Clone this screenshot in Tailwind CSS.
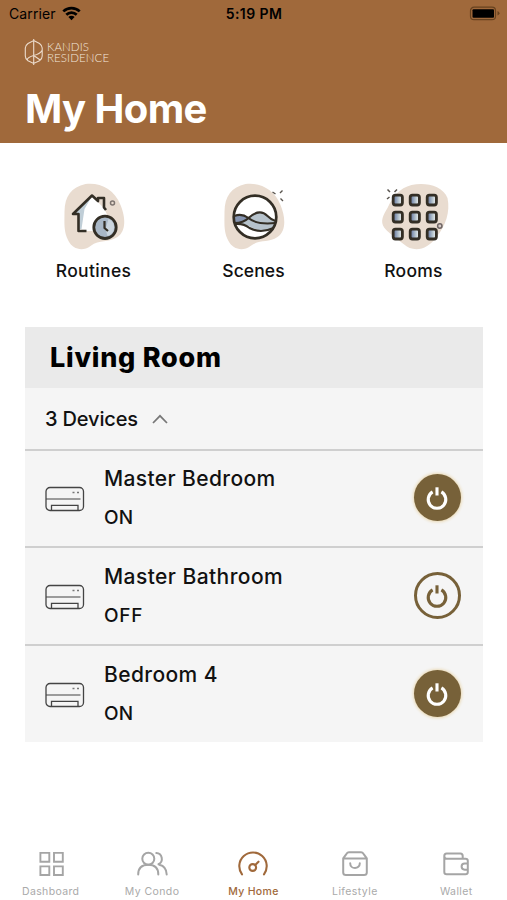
<!DOCTYPE html>
<html lang="en">
<head>
    <meta charset="UTF-8">
    <title>Kandis Residence - My Home</title>
    <meta name="viewport" content="width=device-width, initial-scale=1.0">
    <script src="https://cdn.jsdelivr.net/npm/@tailwindcss/browser@4"></script>
</head>
<body class="bg-white font-['Inter',sans-serif] text-[#111]">

<!-- shared icons -->
<svg class="hidden" xmlns="http://www.w3.org/2000/svg">
    <symbol id="ac" viewBox="0 0 40 26" fill="none">
        <rect x="1" y="1.5" width="37.5" height="23" rx="4" stroke="#444" stroke-width="1.3"/>
        <path d="M1 13H35.5" stroke="#444" stroke-width="1.2"/>
        <path d="M6.5 24.5V19.3H33V24.5" stroke="#444" stroke-width="1.3"/>
        <path d="M27.5 6.5H29.5M32 6.5H34" stroke="#777" stroke-width="1.3"/>
    </symbol>
    <symbol id="power" viewBox="0 0 24 26" fill="none" stroke="currentColor" stroke-width="3.1">
        <path d="M7.6 6.9A8.8 8.8 0 1 0 16.4 6.9"/>
        <path d="M12 2.3V10.5"/>
    </symbol>
</svg>

<div class="w-[507px] h-[900px] mx-auto flex flex-col overflow-hidden">
    <header class="h-[143px] shrink-0 bg-[#a0693b] flex flex-col">
        <div class="h-7 grid grid-cols-3 items-center pl-[9px] pr-[7px] text-black">
            <div class="-mt-[2px] flex items-center gap-[6px] text-[14px] tracking-[0.1px]">
                <span>Carrier</span>
                <svg class="w-[19px] h-[15px]" viewBox="0 0 19 15" fill="none" stroke="#000" stroke-width="2.7">
                    <path d="M1.3 5.4A11.8 11.8 0 0 1 17.7 5.4"/>
                    <path d="M4.3 8.7A7.4 7.4 0 0 1 14.7 8.7"/>
                    <path d="M9.5 14.3L6.4 11.1A4.4 4.4 0 0 1 12.6 11.1Z" fill="#000" stroke="none"/>
                </svg>
            </div>
            <div class="-mt-[2px] -ml-[1px] text-center text-[14px] font-semibold tracking-[0.4px]">5:19 PM</div>
            <svg class="justify-self-end w-[31px] h-[15px] -mt-[2px]" viewBox="0 0 31 15" fill="none">
                <rect x="1.5" y="1.2" width="25" height="12.5" rx="3.5" stroke="#67421f" stroke-width="1.2"/>
                <rect x="3.5" y="3.2" width="21.5" height="8.5" rx="1" fill="#000"/>
                <path d="M28.5 5V9.5Q30.5 8.5 30.5 7.2T28.5 5" fill="#67421f"/>
            </svg>
        </div>
        <div class="flex items-center gap-[3px] pl-[24px] pt-[11px]">
            <svg class="w-5 h-[26px]" viewBox="0 0 20 26" fill="none" stroke="#ecdccd" stroke-width="1.1">
                <path d="M9.7 1.5L15.5 4.5Q18.2 6.5 18.2 9V17Q18.2 20 15.5 21.7L9.7 24.5L4 21.7Q1.3 20 1.3 17V9Q1.3 6.5 4 4.5ZM9.7 0V26M18 11.5Q16 15 9.7 16.5Q4 18 3 21M9.7 16.5L16.2 21"/>
            </svg>
            <div class="font-['Lato',sans-serif] font-light text-[11.5px] leading-[11.5px] text-[#f3e8dd]">
                <div class="tracking-[0.1px]">KANDIS</div>
                <div class="tracking-[0.1px]">RESIDENCE</div>
            </div>
        </div>
        <h1 class="pl-[25px] pt-[18.5px] text-[40px] leading-[50px] font-bold tracking-[-0.6px] text-white">My Home</h1>
    </header>

    <nav class="shrink-0 px-[13.5px] pt-8 grid grid-cols-3 text-center text-[17.5px] leading-[22px] font-medium">
        <a class="flex flex-col items-center gap-[7px]">
            <svg class="w-[90px] h-[78px]" viewBox="-1.5 0 90 78" fill="none" stroke-linejoin="round">
                <path d="M35 9C49 7 64 14 70 30C75 42 76 56 67 62C58 68 49 64 40 71C32 77 22 74 18 66C13 57 14 48 14 37C14 21 21 12 35 9Z" fill="#e9dcd0"/>
                <path d="M28 39V56H51L58 43L54 34L42 21L23 38Z" fill="#fff"/>
                <path d="M28 39H24L41 22L34 34L31 54H28Z" fill="#c0ced7"/>
                <path d="M36 56H28V39H22.5L41.5 20.5L47.5 26V23H53.5V32.5L55.5 35" stroke="#332e25" stroke-width="2.6"/>
                <circle cx="54.5" cy="52.3" r="11.2" fill="#a9b7c6" stroke="#332e25" stroke-width="2.8"/>
                <path d="M58 44A9 9 0 0 1 57 61L55 54Z" fill="#cbd5de"/>
                <path d="M54 46V53L57.5 56" stroke="#332e25" stroke-width="2.2"/>
                <circle cx="62" cy="28" r="2" stroke="#7d7470" stroke-width="1.5"/>
            </svg>
            <span class="tracking-[0.35px]">Routines</span>
        </a>
        <a class="flex flex-col items-center gap-[7px]">
            <svg class="w-[90px] h-[78px]" viewBox="-1.5 0 90 78" fill="none">
                <path d="M35 9C49 7 64 14 70 30C75 42 76 56 67 62C58 68 49 64 40 71C32 77 22 74 18 66C13 57 14 48 14 37C14 21 21 12 35 9Z" fill="#e9dcd0"/>
                <circle cx="44.5" cy="42" r="21.3" fill="#fff"/>
                <path d="M24 42Q30 38 37 43Q33 48 24 48Z" fill="#8695b1"/>
                <path d="M24 48Q33 48 38 43Q48 34 57 41Q61 45 65 47L64 53Q51 58 42 53Q34 48 24 48Z" fill="#b7c3cc"/>
                <path d="M24 41Q31 38 38 43Q46 50 65 48M24 48Q33 48 38 43Q49 33 57 41Q61 45 65 46M24 49Q33 48 39 53Q50 59 63 53" stroke="#332e25" stroke-width="2.1"/>
                <circle cx="44.5" cy="42" r="21.3" stroke="#332e25" stroke-width="2.7"/>
                <path d="M62 17L65 19M69.5 18L72 15.5M70 23.5L72.5 26" stroke="#59544e" stroke-width="1.4"/>
            </svg>
            <span class="tracking-[0.1px]">Scenes</span>
        </a>
        <a class="flex flex-col items-center gap-[7px]">
            <svg class="w-[90px] h-[78px]" viewBox="-1.5 0 90 78" fill="none">
                <defs>
                    <linearGradient id="tile" x1="0" x2="1" y1="0" y2="0">
                        <stop offset="0.25" stop-color="#8293b2"/>
                        <stop offset="0.6" stop-color="#b9c7cf"/>
                        <stop offset="1" stop-color="#f7f8f8"/>
                    </linearGradient>
                </defs>
                <path d="M41 10C54 7 72 10 77 23C80 37 75 51 66 62C57 75 43 78 33 69C26 63 20 60 14 53C9 46 13 40 17 33C22 22 29 13 41 10Z" fill="#e9dcd0"/>
                <g fill="url(#tile)" stroke="#332e25" stroke-width="2.8">
                    <rect x="22.7" y="20.2" width="9.2" height="9.8" rx="2.2"/>
                    <rect x="39.7" y="20.2" width="9.2" height="9.8" rx="2.2"/>
                    <rect x="56.7" y="20.2" width="9.2" height="9.8" rx="2.2"/>
                    <rect x="22.7" y="37.2" width="9.2" height="9.8" rx="2.2"/>
                    <rect x="39.7" y="37.2" width="9.2" height="9.8" rx="2.2"/>
                    <rect x="56.7" y="37.2" width="9.2" height="9.8" rx="2.2"/>
                    <rect x="22.7" y="54.2" width="9.2" height="9.8" rx="2.2"/>
                    <rect x="39.7" y="54.2" width="9.2" height="9.8" rx="2.2"/>
                    <rect x="56.7" y="54.2" width="9.2" height="9.8" rx="2.2"/>
                </g>
                <circle cx="69.3" cy="51" r="2.2" fill="#d9ccc8" stroke="#6e6564" stroke-width="1.5"/>
                <path d="M17 14.5L19.5 17M24 17L26.5 14.5M16.5 24L19 22" stroke="#59544e" stroke-width="1.5"/>
            </svg>
            <span class="tracking-[0.3px]">Rooms</span>
        </a>
    </nav>

    <main class="mt-[45px] ml-[25px] mr-[24.5px] shrink-0 bg-[#f5f5f5]">
        <h2 class="h-[61px] bg-[#eaeaea] pl-[25px] pt-[2px] flex items-center text-[27px] font-extrabold tracking-[0.75px] text-black">Living Room</h2>
        <div class="h-[60.5px] pl-5 pt-[2px] flex items-center gap-[14px]">
            <span class="text-[20px] font-medium tracking-[-0.15px]">3 Devices</span>
            <svg class="w-4 h-[10px]" viewBox="0 0 16 10" fill="none" stroke="#777" stroke-width="1.7"><path d="M1 9L8 1.8L15 9"/></svg>
        </div>
        <div class="h-[97.7px] border-t-2 border-[#cfcfcf] pl-5 pr-[22px] pt-[1px] flex items-center">
            <svg class="w-10 h-[26px]"><use href="#ac"/></svg>
            <div class="ml-[19px] flex-1 font-medium">
                <div class="text-[21px] leading-[28px] tracking-[0.38px]">Master Bedroom</div>
                <div class="mt-[11px] text-[19px] leading-[28px] tracking-[0.3px]">ON</div>
            </div>
            <button class="mb-[2px] w-[47px] h-[47px] rounded-full bg-[#776139] text-white flex items-center justify-center shadow-[0_0_3px_1px_#ead9b4]">
                <svg class="w-6 h-[26px]"><use href="#power"/></svg>
            </button>
        </div>
        <div class="h-[97.7px] border-t-2 border-[#cfcfcf] pl-5 pr-[22px] pt-[1px] flex items-center">
            <svg class="w-10 h-[26px]"><use href="#ac"/></svg>
            <div class="ml-[19px] flex-1 font-medium">
                <div class="text-[21px] leading-[28px] tracking-[0.43px]">Master Bathroom</div>
                <div class="mt-[11px] text-[19px] leading-[28px] tracking-[0.8px]">OFF</div>
            </div>
            <button class="mb-[2px] w-[47px] h-[47px] rounded-full border-3 border-[#776139] text-[#776139] flex items-center justify-center">
                <svg class="w-6 h-[26px]"><use href="#power"/></svg>
            </button>
        </div>
        <div class="h-[97.7px] border-t-2 border-[#cfcfcf] pl-5 pr-[22px] pt-[2px] flex items-center">
            <svg class="w-10 h-[26px]"><use href="#ac"/></svg>
            <div class="ml-[19px] flex-1 font-medium">
                <div class="text-[21px] leading-[28px] tracking-[0.4px]">Bedroom 4</div>
                <div class="mt-[11px] text-[19px] leading-[28px] tracking-[0.3px]">ON</div>
            </div>
            <button class="mb-[2px] w-[47px] h-[47px] rounded-full bg-[#776139] text-white flex items-center justify-center shadow-[0_0_3px_1px_#ead9b4]">
                <svg class="w-6 h-[26px]"><use href="#power"/></svg>
            </button>
        </div>
    </main>

    <footer class="mt-auto h-[52px] shrink-0 grid grid-cols-5 text-center text-[10.5px] leading-[14px] text-[#aaa]">
        <a class="flex flex-col items-center gap-[9px]">
            <svg class="w-7 h-7" viewBox="0 0 28 28" fill="none" stroke="#a5a5a5" stroke-width="1.9">
                <path d="M3.4 4.9H12.3V13.7H3.4ZM17 4.9H25.8V13.7H17ZM3.4 18.4H12.3V27H3.4ZM17 18.4H25.8V27H17Z"/>
            </svg>
            <span class="tracking-[0.35px]">Dashboard</span>
        </a>
        <a class="flex flex-col items-center gap-[9px]">
            <svg class="w-8 h-7" viewBox="0 0 32 28" fill="none" stroke="#a5a5a5" stroke-width="2" stroke-linecap="round">
                <circle cx="12.3" cy="10.8" r="6"/>
                <path d="M2.2 26.5C2.2 20 6.3 16.8 12.3 16.8S22.3 20 22.3 26.5"/>
                <path d="M20.3 5A5.9 5.9 0 0 1 22.5 16.2M23.3 16.8Q30.5 18.5 30.7 26.5"/>
            </svg>
            <span class="tracking-[0.4px]">My Condo</span>
        </a>
        <a class="flex flex-col items-center gap-[9px] text-[#a0693b] font-medium">
            <svg class="w-8 h-7" viewBox="0 0 32 28" fill="none" stroke="#a0693b" stroke-width="2.1" stroke-linecap="round">
                <path d="M5 26.3A13.7 13.7 0 1 1 27 26.3"/>
                <circle cx="15.7" cy="19.5" r="3.4"/>
                <path d="M18.2 17L21.5 13.7"/>
            </svg>
            <span class="tracking-[0.3px]">My Home</span>
        </a>
        <a class="flex flex-col items-center gap-[9px]">
            <svg class="w-7 h-7" viewBox="0 0 28 28" fill="none" stroke="#a5a5a5" stroke-width="2" stroke-linejoin="round" stroke-linecap="round">
                <path d="M2.2 10.3L5.5 5.8Q6.5 4.3 8 4.3H20Q21.5 4.3 22.5 5.8L25.8 10.3V24.5Q25.8 27 23 27H5Q2.2 27 2.2 24.5ZM2.5 10.5H25.5M9.2 15.2C9.2 21.7 18.8 21.7 18.8 15.2"/>
            </svg>
            <span class="tracking-[0.4px]">Lifestyle</span>
        </a>
        <a class="flex flex-col items-center gap-[9px]">
            <svg class="w-7 h-7" viewBox="0 0 28 28" fill="none" stroke="#a5a5a5" stroke-width="2" stroke-linejoin="round">
                <path d="M2.3 8V24Q2.3 26.3 4.6 26.3H23.5Q25.8 26.3 25.8 24V13Q25.8 10.7 23.5 10.7H4.6Q2.3 10.7 2.3 8.1Q2.3 5.5 4.6 5.5H18.4Q20.7 5.5 20.7 8V10.5M25.8 15.5H22.7A3.1 3.1 0 0 0 22.7 21.7H25.8"/>
            </svg>
            <span class="tracking-[0.4px]">Wallet</span>
        </a>
    </footer>
</div>

</body>
</html>
